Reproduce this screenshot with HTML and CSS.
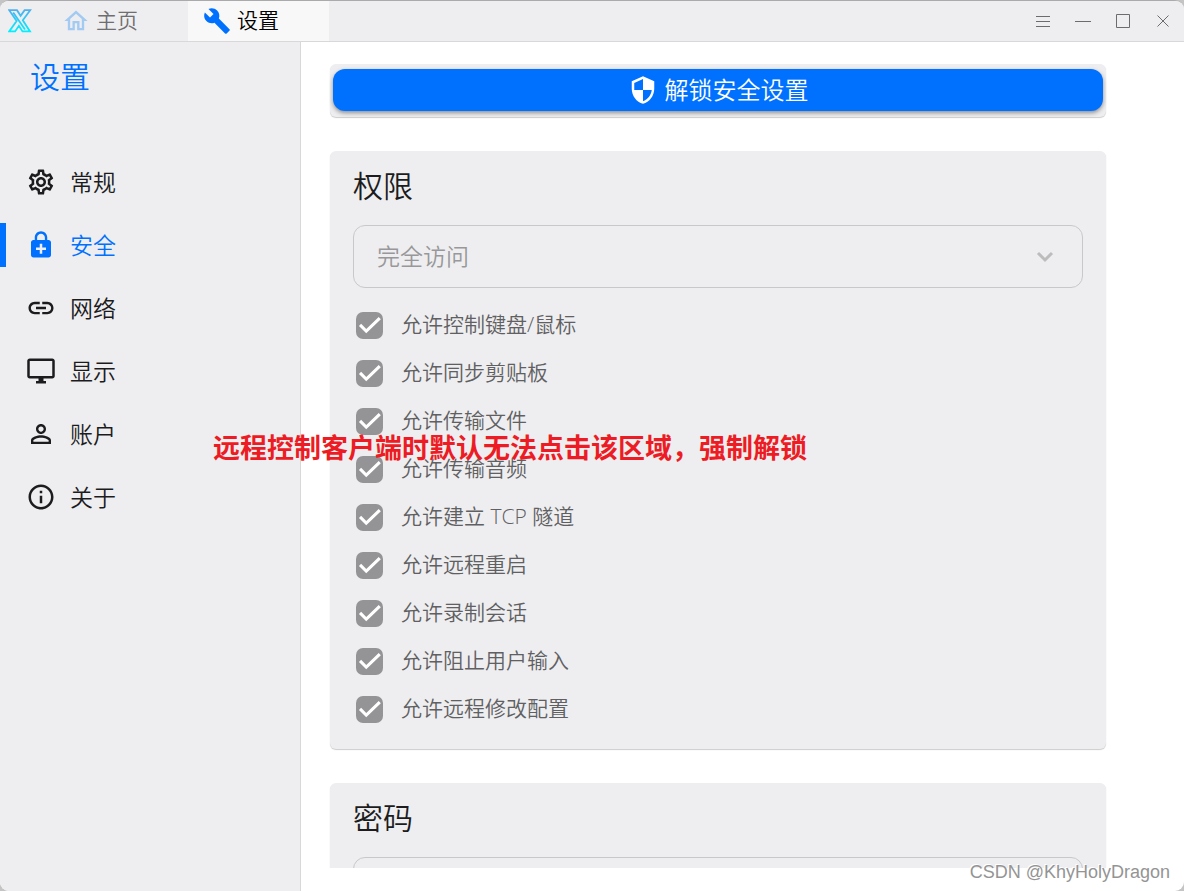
FILE: index.html
```html
<!DOCTYPE html>
<html lang="zh-CN">
<head>
    <meta charset="UTF-8">
    <meta name="viewport" content="width=device-width, initial-scale=1.0">
    <title>设置</title>
    <link rel="stylesheet" href="styles.css">
</head>
<body>
    <div class="window">
        <header class="titlebar">
            <svg class="logo" viewBox="0 0 24 24" aria-hidden="true">
                <defs>
                    <linearGradient id="logo-fill" x1="0" y1="0" x2="0" y2="1">
                        <stop offset="0" stop-color="#4fb0ee"/>
                        <stop offset="1" stop-color="#00f0ff"/>
                    </linearGradient>
                </defs>
                <path fill="none" stroke="url(#logo-fill)" stroke-width="1.8" d="M1.2 1.2H9l3.6 5.6 4-5.6h5.6l-7.4 10 7.2 11.2h-7.5l-3.6-5.6-3.8 5.6H1.2l7.4-10.4zM5.2 3.4l11.8 17"/>
            </svg>
            <nav class="tabs">
                <a class="tab" href="#home">
                    <svg class="tab-icon home-icon" viewBox="0 0 24 24" aria-hidden="true"><path d="M12 5.69l5 4.5V18h-2v-6H9v6H7v-7.81l5-4.5M12 3L2 12h3v8h6v-6h2v6h6v-8h3L12 3z"/></svg>
                    主页
                </a>
                <a class="tab active" href="#settings">
                    <svg class="tab-icon" viewBox="0 0 24 24" aria-hidden="true"><path d="M22.7 19l-9.1-9.1c.9-2.3.4-5-1.5-6.9-2-2-5-2.4-7.4-1.3L9 6 6 9 1.6 4.7C.4 7.1.9 10.1 2.9 12.1c1.9 1.9 4.6 2.4 6.9 1.5l9.1 9.1c.4.4 1 .4 1.4 0l2.3-2.3c.5-.4.5-1.1.1-1.4z"/></svg>
                    设置
                </a>
            </nav>
            <div class="window-buttons">
                <button type="button" aria-label="菜单"><svg viewBox="0 0 18 18"><path d="M2 4.5h14M2 9.5h14M2 14.5h14"/></svg></button>
                <button type="button" aria-label="最小化"><svg viewBox="0 0 18 18"><path d="M1 9.5h16"/></svg></button>
                <button type="button" aria-label="最大化"><svg viewBox="0 0 18 18"><path d="M2.5 2.5h13v13h-13z"/></svg></button>
                <button type="button" aria-label="关闭"><svg viewBox="0 0 18 18"><path d="M3.5 3.5l11 11M14.5 3.5l-11 11"/></svg></button>
            </div>
        </header>

        <div class="body">
            <aside class="sidebar">
                <h1>设置</h1>
                <nav class="menu">
                    <a href="#general">
                        <svg viewBox="0 0 24 24" aria-hidden="true"><path d="M19.43 12.98c.04-.32.07-.64.07-.98 0-.34-.03-.66-.07-.98l2.11-1.65c.19-.15.24-.42.12-.64l-2-3.46c-.09-.16-.26-.25-.44-.25-.06 0-.12.01-.17.03l-2.49 1c-.52-.4-1.08-.73-1.69-.98l-.38-2.65C14.46 2.18 14.25 2 14 2h-4c-.25 0-.46.18-.49.42l-.38 2.65c-.61.25-1.17.59-1.69.98l-2.49-1c-.06-.02-.12-.03-.18-.03-.17 0-.34.09-.43.25l-2 3.46c-.13.22-.07.49.12.64l2.11 1.65c-.04.32-.07.65-.07.98 0 .33.03.66.07.98l-2.11 1.65c-.19.15-.24.42-.12.64l2 3.46c.09.16.26.25.44.25.06 0 .12-.01.17-.03l2.49-1c.52.4 1.08.73 1.69.98l.38 2.65c.03.24.24.42.49.42h4c.25 0 .46-.18.49-.42l.38-2.65c.61-.25 1.17-.59 1.69-.98l2.49 1c.06.02.12.03.18.03.17 0 .34-.09.43-.25l2-3.46c.12-.22.07-.49-.12-.64l-2.11-1.65zm-1.98-1.71c.04.31.05.52.05.73 0 .21-.02.43-.05.73l-.14 1.13.89.7 1.08.84-.7 1.21-1.27-.51-1.04-.42-.9.68c-.43.32-.84.56-1.25.73l-1.06.43-.16 1.13-.2 1.35h-1.4l-.19-1.35-.16-1.13-1.06-.43c-.43-.18-.83-.41-1.23-.71l-.91-.7-1.06.43-1.27.51-.7-1.21 1.08-.84.89-.7-.14-1.13c-.03-.31-.05-.54-.05-.74s.02-.43.05-.73l.14-1.13-.89-.7-1.08-.84.7-1.21 1.27.51 1.04.42.9-.68c.43-.32.84-.56 1.25-.73l1.06-.43.16-1.13.2-1.35h1.39l.19 1.35.16 1.13 1.06.43c.43.18.83.41 1.23.71l.91.7 1.06-.43 1.27-.51.7 1.21-1.07.85-.89.7.14 1.13zM12 8c-2.21 0-4 1.79-4 4s1.79 4 4 4 4-1.79 4-4-1.79-4-4-4zm0 6c-1.1 0-2-.9-2-2s.9-2 2-2 2 .9 2 2-.9 2-2 2z"/></svg>
                        常规
                    </a>
                    <a class="active" href="#security">
                        <svg viewBox="0 0 24 24" aria-hidden="true"><path d="M18 8h-1V6c0-2.76-2.24-5-5-5S7 3.24 7 6v2H6c-1.1 0-2 .9-2 2v10c0 1.1.9 2 2 2h12c1.1 0 2-.9 2-2V10c0-1.1-.9-2-2-2zM8.9 6c0-1.71 1.39-3.1 3.1-3.1s3.1 1.39 3.1 3.1v2H8.9V6zM16 16h-3v3h-2v-3H8v-2h3v-3h2v3h3v2z"/></svg>
                        安全
                    </a>
                    <a href="#network">
                        <svg viewBox="0 0 24 24" aria-hidden="true"><path d="M3.9 12c0-1.71 1.39-3.1 3.1-3.1h4V7H7c-2.76 0-5 2.24-5 5s2.24 5 5 5h4v-1.9H7c-1.71 0-3.1-1.39-3.1-3.1zM8 13h8v-2H8v2zm9-6h-4v1.9h4c1.71 0 3.1 1.39 3.1 3.1s-1.39 3.1-3.1 3.1h-4V17h4c2.76 0 5-2.24 5-5s-2.24-5-5-5z"/></svg>
                        网络
                    </a>
                    <a href="#display">
                        <svg viewBox="0 0 24 24" aria-hidden="true"><path d="M21 2H3c-1.1 0-2 .9-2 2v12c0 1.1.9 2 2 2h7v2H8v2h8v-2h-2v-2h7c1.1 0 2-.9 2-2V4c0-1.1-.9-2-2-2zm0 14H3V4h18v12z"/></svg>
                        显示
                    </a>
                    <a href="#account">
                        <svg viewBox="0 0 24 24" aria-hidden="true"><path d="M12 5.9c1.16 0 2.1.94 2.1 2.1s-.94 2.1-2.1 2.1S9.9 9.16 9.9 8s.94-2.1 2.1-2.1m0 9c2.97 0 6.1 1.46 6.1 2.1v1.1H5.9V17c0-.64 3.13-2.1 6.1-2.1M12 4C9.79 4 8 5.79 8 8s1.79 4 4 4 4-1.79 4-4-1.79-4-4-4zm0 9c-2.67 0-8 1.34-8 4v3h16v-3c0-2.66-5.33-4-8-4z"/></svg>
                        账户
                    </a>
                    <a href="#about">
                        <svg viewBox="0 0 24 24" aria-hidden="true"><path d="M11 7h2v2h-2zm0 4h2v6h-2zm1-9C6.48 2 2 6.48 2 12s4.48 10 10 10 10-4.48 10-10S17.52 2 12 2zm0 18c-4.41 0-8-3.59-8-8s3.59-8 8-8 8 3.59 8 8-3.59 8-8 8z"/></svg>
                        关于
                    </a>
                </nav>
            </aside>

            <main class="content">
                <div class="card unlock-card">
                    <button class="unlock" type="button">
                        <svg viewBox="0 0 24 24" aria-hidden="true"><path d="M12 1L3 5v6c0 5.55 3.84 10.74 9 12 5.16-1.26 9-6.45 9-12V5l-9-4zm0 10.99h7c-.53 4.12-3.28 7.79-7 8.94V12H5V6.3l7-3.11v8.8z"/></svg>
                        解锁安全设置
                    </button>
                </div>

                <section class="card">
                    <h2 id="permissions">权限</h2>
                    <div class="select">
                        <select aria-labelledby="permissions" disabled>
                            <option>完全访问</option>
                        </select>
                        <svg viewBox="0 0 24 24" aria-hidden="true"><path d="M5 8l7 7 7-7"/></svg>
                    </div>
                    <div class="options">
                        <label><input type="checkbox" checked disabled>允许控制键盘/鼠标</label>
                        <label><input type="checkbox" checked disabled>允许同步剪贴板</label>
                        <label><input type="checkbox" checked disabled>允许传输文件</label>
                        <label><input type="checkbox" checked disabled>允许传输音频</label>
                        <label><input type="checkbox" checked disabled>允许建立 TCP 隧道</label>
                        <label><input type="checkbox" checked disabled>允许远程重启</label>
                        <label><input type="checkbox" checked disabled>允许录制会话</label>
                        <label><input type="checkbox" checked disabled>允许阻止用户输入</label>
                        <label><input type="checkbox" checked disabled>允许远程修改配置</label>
                    </div>
                </section>

                <section class="card">
                    <h2 id="password">密码</h2>
                    <div class="select">
                        <select aria-labelledby="password" disabled></select>
                    </div>
                </section>
            </main>
        </div>

        <p class="note">远程控制客户端时默认无法点击该区域，强制解锁</p>
        <p class="watermark">CSDN @KhyHolyDragon</p>
    </div>
</body>
</html>
```

FILE: styles.css
```css
* {
    box-sizing: border-box;
}
body {
    margin: 0;
    background-color: #c4c4c4;
    color: #1c1c1e;
    font-family: "Open Sans", "Noto Sans CJK SC", sans-serif;
    font-weight: 350;
    line-height: 1.5;
}
a {
    color: inherit;
    text-decoration: none;
}
button, select {
    font: inherit;
}
svg {
    display: block;
    flex: none;
    fill: currentColor;
}

.window {
    position: relative;
    display: flex;
    flex-direction: column;
    height: 100vh;
    overflow: hidden;
    border-top: 1px solid #aaaaac;
    border-radius: 9px;
    background-color: white;
}

/* title bar */
.titlebar {
    display: flex;
    align-items: center;
    height: 41px;
    padding: 0 10px 0 8px;
    border-bottom: 1px solid #d8d8da;
    background-color: #eeeef0;
}
.logo {
    width: 24px;
    height: 24px;
}
.tabs {
    display: flex;
    align-self: stretch;
    margin-left: 15px;
}
.tab {
    display: flex;
    align-items: center;
    gap: 6px;
    width: 141px;
    padding-left: 15px;
    color: #6e6e70;
    font-size: 21px;
}
.tab.active {
    background-color: #f8f8f8;
    color: black;
}
.tab-icon {
    width: 28px;
    height: 28px;
    color: #0071ff;
}
.home-icon {
    color: #a2caf2;
}
.window-buttons {
    display: flex;
    gap: 18px;
    margin-left: auto;
}
.window-buttons button {
    padding: 0 2px;
    border: none;
    background: none;
}
.window-buttons svg {
    width: 18px;
    height: 18px;
    fill: none;
    stroke: #6c6c6e;
}

.body {
    display: flex;
    flex: 1;
    min-height: 0;
}

/* sidebar */
.sidebar {
    width: 301px;
    border-right: 1px solid #d8d8da;
    background-color: #eeeef0;
}
.sidebar h1 {
    margin: 15px 0 63px 30px;
    color: #0071ff;
    font-size: 30px;
    font-weight: 350;
    line-height: 40px;
}
.menu {
    display: flex;
    flex-direction: column;
    gap: 19px;
}
.menu a {
    display: flex;
    align-items: center;
    gap: 14px;
    height: 44px;
    padding-left: 20px;
    border-left: 6px solid transparent;
    font-size: 23px;
}
.menu a.active {
    border-color: #0071ff;
    color: #0071ff;
}
.menu svg {
    width: 30px;
    height: 30px;
}

/* settings cards */
.content {
    flex: 1;
    margin-bottom: 23px;
    padding: 22px 78px 0 29px;
    overflow: hidden;
}
.card {
    margin-bottom: 34px;
    padding: 15px 23px;
    border-radius: 6px;
    background-color: #eeeef0;
    box-shadow: 0 1px 1px rgba(0, 0, 0, 0.2);
}
.card h2 {
    margin: 0 0 19px;
    font-size: 30px;
    font-weight: 350;
    line-height: 40px;
}
.unlock-card {
    padding: 5px 3px 6px;
}
.unlock {
    display: flex;
    align-items: center;
    justify-content: center;
    gap: 7px;
    width: 100%;
    height: 42px;
    padding: 0;
    border: none;
    border-radius: 12px;
    background-color: #0071ff;
    box-shadow: 0 2px 4px rgba(0, 0, 0, 0.4);
    color: white;
    font-size: 24px;
}
.unlock svg {
    width: 30px;
    height: 30px;
}

.select {
    position: relative;
}
.select select {
    display: block;
    width: 100%;
    height: 63px;
    padding: 0 23px;
    appearance: none;
    border: 1px solid #c8c8ca;
    border-radius: 12px;
    background: none;
    color: #98989a;
    font-size: 23px;
    opacity: 1;
}
.select svg {
    position: absolute;
    top: 20px;
    right: 26px;
    width: 24px;
    height: 24px;
    fill: none;
    stroke: #bcbcbc;
    stroke-width: 3;
}

.options {
    margin-top: 13px;
    padding: 0 0 1px 3px;
}
.options label {
    display: flex;
    align-items: center;
    gap: 18px;
    height: 48px;
    color: #606062;
    font-size: 21px;
}
.options input {
    width: 27px;
    height: 27px;
    margin: 0;
    appearance: none;
    border-radius: 7px;
    background-color: #949496;
}
.options input:checked::before {
    content: "";
    display: block;
    height: 100%;
    background-color: white;
    clip-path: polygon(11% 54%, 38% 81%, 92% 29%, 84% 20%, 38% 65%, 19% 45%);
}

/* overlays */
.note {
    position: absolute;
    top: 427px;
    left: 213px;
    margin: 0;
    color: #ed1c24;
    font-size: 27px;
    font-weight: 700;
    line-height: 40px;
    white-space: nowrap;
}
.watermark {
    position: absolute;
    right: 14px;
    bottom: 7px;
    margin: 0;
    color: #949494;
    font-family: "Liberation Sans", sans-serif;
    font-size: 18px;
    font-weight: 400;
    line-height: 24px;
    text-shadow: -1px -1px 0 white;
}
```
